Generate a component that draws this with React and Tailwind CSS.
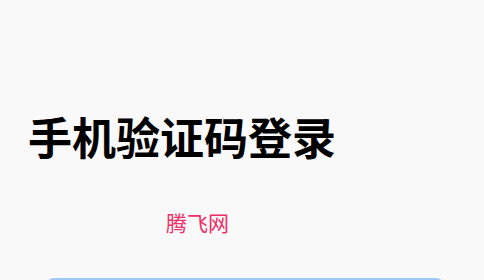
export default function App() {
  return (
    <div
      className="min-h-screen bg-[#f9f9f9] overflow-hidden"
      style={{ fontFamily: '"Noto Sans CJK SC", "Noto Sans", sans-serif' }}
    >
      <div className="pt-[108px] px-[28px]">
        <h1 className="text-[44px] leading-[56px] font-bold text-black">手机验证码登录</h1>
      </div>

      <div className="mt-[44px] pl-[166px]">
        <span className="text-[21px] leading-[28px] text-[#ee3068]">腾飞网</span>
      </div>

      <div className="mt-[42px] pl-[46px] pr-[40px]">
        <button
          type="button"
          className="w-full h-[44px] rounded-lg bg-[#a0cafb] text-white text-base"
        >
          登录
        </button>
      </div>
    </div>
  );
}
